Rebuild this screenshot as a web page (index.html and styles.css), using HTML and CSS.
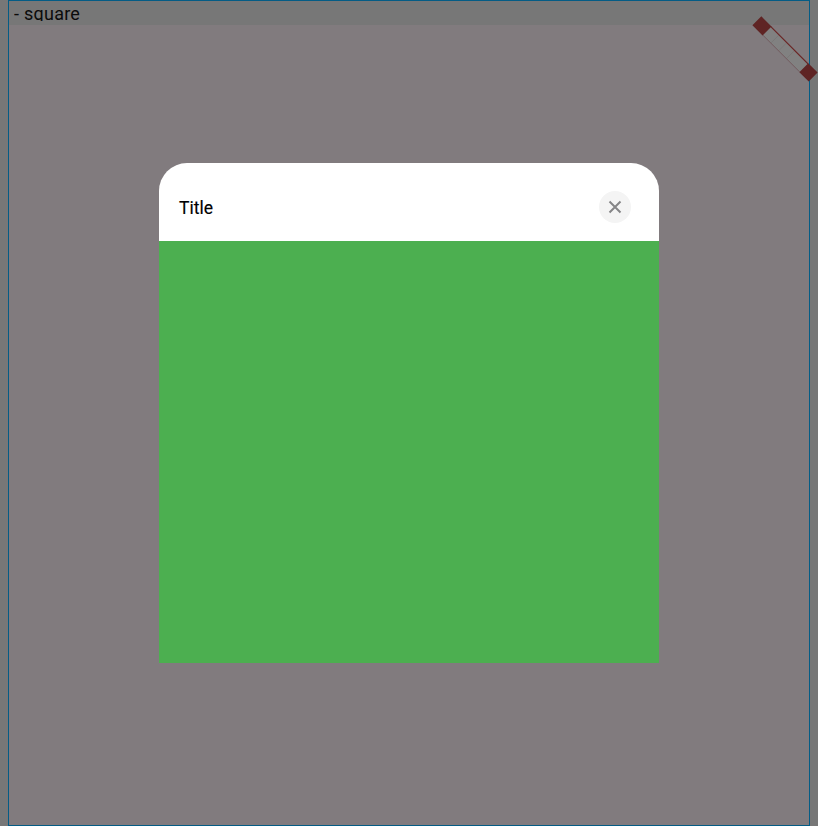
FILE: index.html
```html
<!DOCTYPE html>
<html lang="en">
<head>
<meta charset="utf-8">
<title>square</title>
<link rel="stylesheet" href="styles.css">
</head>
<body>
<main class="frame">
  <header class="caption"><span class="caption-text">- square</span></header>
  <section class="stage">
    <div class="dialog">
      <div class="dialog-header">
        <h1 class="dialog-title">Title</h1>
        <button class="close" aria-label="Close">
          <svg width="14" height="14" viewBox="0 0 14 14"><path d="M1.5 1.5l11 11M12.5 1.5l-11 11"/></svg>
        </button>
      </div>
      <div class="dialog-body"></div>
    </div>
  </section>
</main>
<svg class="ribbon" width="66" height="66" viewBox="752 16 66 66" aria-hidden="true">
  <g transform="translate(785 48.75) rotate(45)">
    <rect class="ribbon-fill" x="-26" y="-6" width="53" height="12.2"/>
    <path class="ribbon-tick" d="M-14 -5v11M-3 -5v11M8 -5v11"/>
    <path class="ribbon-bottom" d="M-26 6h53"/>
    <path class="ribbon-top" d="M-26 -5.6h53"/>
    <path class="ribbon-end" d="M-39.7 -6.2h14.4v12.6h-14.4zM26.7 -6.2h13.2v12.6h-13.2z"/>
  </g>
</svg>
</body>
</html>
```
FILE: styles.css
```css
* {
  box-sizing: border-box;
}

body {
  margin: 0;
  padding: 0 8px;
  height: 826px;
  overflow: hidden;
  background: #777777;
  font-family: Roboto, sans-serif;
}

.frame {
  display: flex;
  flex-direction: column;
  height: 826px;
  border: 1px solid #045c85;
}

.caption {
  height: 24px;
  padding-left: 5px;
  background: #777777;
}

.caption-text {
  display: block;
  height: 20px;
  overflow: hidden;
  font-size: 18px;
  line-height: 26px;
  letter-spacing: 0.25px;
  color: #0b0b0b;
}

.stage {
  flex: 1;
  display: flex;
  justify-content: center;
  align-items: flex-start;
  padding-top: 138px;
  background: #817b7e;
}

.dialog {
  width: 500px;
  height: 500px;
  display: flex;
  flex-direction: column;
  border-radius: 28px 28px 0 0;
  overflow: hidden;
  background: #ffffff;
}

.dialog-header {
  display: flex;
  align-items: center;
  justify-content: space-between;
  height: 78px;
  padding: 10px 28px 0 20px;
}

.dialog-title {
  margin: 0;
  font-size: 17.5px;
  line-height: 24px;
  padding-top: 1px;
  font-weight: 400;
  color: #000000;
  -webkit-text-stroke: 0.15px #000000;
}

.close {
  display: flex;
  align-items: center;
  justify-content: center;
  width: 32px;
  height: 32px;
  padding: 0;
  border: 0;
  border-radius: 50%;
  background: #f4f4f4;
}

.close path {
  fill: none;
  stroke: #858587;
  stroke-width: 2;
}

.dialog-body {
  flex: 1;
  background: #4caf50;
}

.ribbon {
  position: absolute;
  left: 752px;
  top: 16px;
}

.ribbon-fill {
  fill: #818181;
}

.ribbon-end {
  fill: #5f2424;
}

.ribbon-top,
.ribbon-bottom,
.ribbon-tick {
  fill: none;
  stroke: #6b2424;
  stroke-width: 1.3;
}

.ribbon-bottom {
  stroke: #6e5053;
  stroke-width: 0.7;
}

.ribbon-tick {
  stroke: #747171;
  stroke-width: 0.5;
}
```
